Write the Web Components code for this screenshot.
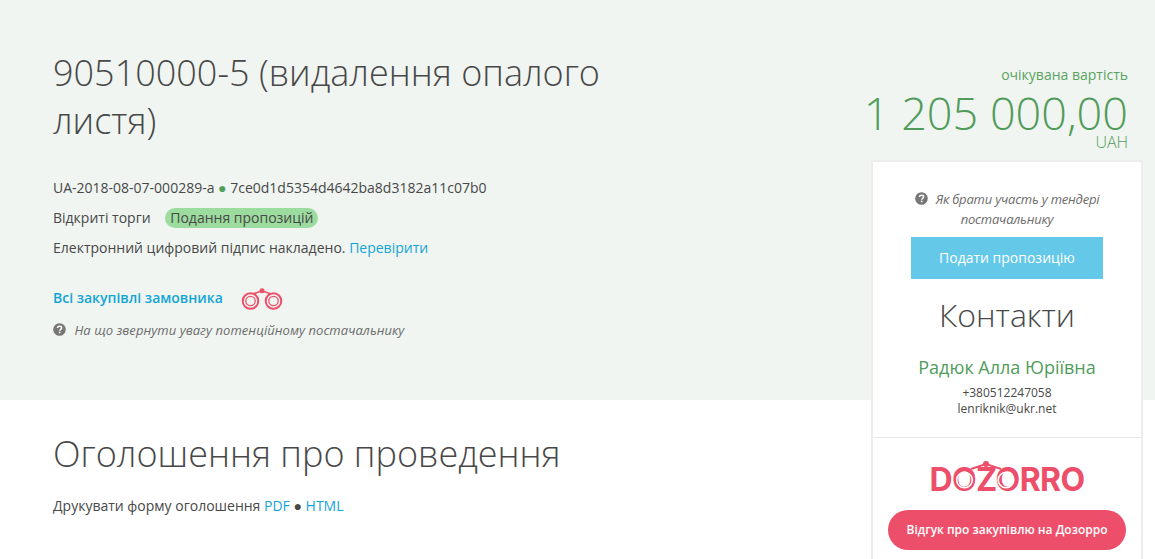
<!DOCTYPE html>
<html lang="uk">
<head>
<meta charset="utf-8">
<title>Тендер</title>
<style>
  html, body { margin: 0; padding: 0; background: #fff; height: 559px; overflow: hidden; }
  body { font-family: "Open Sans", sans-serif; color: #484848; position: relative; }
</style>
</head>
<body>
<tender-page></tender-page>

<script>
const HELP_ICON = `<svg width="13" height="13" viewBox="0 0 14 14" aria-hidden="true">
  <circle cx="7" cy="7" r="6.8" fill="#777"/>
  <path d="M4.8 5.4c.1-1.3 1-2 2.3-2s2.2.7 2.2 1.8c0 1.7-2 1.6-2 3.1" fill="none" stroke="#fff" stroke-width="1.6"/>
  <rect x="6.3" y="9.3" width="1.7" height="1.7" fill="#fff"/>
</svg>`;

const BINOCULARS = `<g fill="none" stroke="#ed4f6a">
  <circle cx="9.5" cy="13" r="7.8" stroke-width="2"/>
  <circle cx="9.5" cy="13" r="4.7" stroke-width="1.3"/>
  <circle cx="32.5" cy="13" r="7.8" stroke-width="2"/>
  <circle cx="32.5" cy="13" r="4.7" stroke-width="1.3"/>
  <path d="M12 6l9-3.2 9 3.2" stroke-width="1.6"/>
  </g><circle cx="21" cy="2.8" r="2.5" fill="#ed4f6a"/>`;

class HelpNote extends HTMLElement {
  connectedCallback() {
    this.attachShadow({ mode: 'open' });
    this.shadowRoot.innerHTML = `
      <style>
        :host {
          display: block;
          font-size: 13px;
          font-style: italic;
          line-height: 20px;
          color: #6c6c6c;
          letter-spacing: var(--note-spacing, 0.05px);
        }
        svg { vertical-align: -1px; margin-right: 5px; }
      </style>
      ${HELP_ICON}<slot></slot>
    `;
  }
}
customElements.define('help-note', HelpNote);

class TenderHero extends HTMLElement {
  connectedCallback() {
    this.attachShadow({ mode: 'open' });
    this.shadowRoot.innerHTML = `
      <style>
        :host {
          display: flex;
          justify-content: space-between;
          box-sizing: border-box;
          height: 400px;
          padding: 49px 27px 0 53px;
          background: #f0f5f1;
        }
        a { color: #13a5d6; text-decoration: none; }
        h1 {
          width: 640px;
          margin: 0 0 33px;
          font-size: 36px;
          font-weight: 300;
          line-height: 48px;
          color: #484848;
        }
        .row { font-size: 14px; line-height: 20px; margin-bottom: 10px; color: #484848; }
        .dot { color: #4f9f5b; font-size: 14px; }
        .badge {
          display: inline-block;
          margin-left: 11px;
          padding: 0 5px;
          border-radius: 10px;
          background: #9cdc9e;
          line-height: 20px;
        }
        .owner { display: flex; align-items: center; gap: 18px; margin: 28px 0 12px; height: 22px; }
        .owner a { font-weight: 600; font-size: 14px; }
        .owner svg { margin-top: 4px; }
        .price { text-align: right; color: #519c5b; }
        .price small { display: block; font-size: 14px; line-height: 20px; margin-top: 16px; color: #5aa35f; }
        .price b { display: block; font-size: 45px; font-weight: 300; line-height: 40px; margin-top: 8px; }
        .price i { display: block; font-style: normal; font-weight: 300; font-size: 16px; line-height: 18px; }
      </style>
      <div>
        <h1>90510000-5 (видалення опалого листя)</h1>
        <div class="row">UA-2018-08-07-000289-a <span class="dot">●</span> 7ce0d1d5354d4642ba8d3182a11c07b0</div>
        <div class="row">Відкриті торги <span class="badge">Подання пропозицій</span></div>
        <div class="row">Електронний цифровий підпис накладено. <a href="#">Перевірити</a></div>
        <div class="owner">
          <a href="#">Всі закупівлі замовника</a>
          <svg width="42" height="22" viewBox="0 0 42 22">${BINOCULARS}</svg>
        </div>
        <help-note>&nbsp;На що звернути увагу потенційному постачальнику</help-note>
      </div>
      <div class="price">
        <small>очікувана вартість</small>
        <b>1 205 000,00</b>
        <i>UAH</i>
      </div>
    `;
  }
}
customElements.define('tender-hero', TenderHero);

class NoticeSection extends HTMLElement {
  connectedCallback() {
    this.attachShadow({ mode: 'open' });
    this.shadowRoot.innerHTML = `
      <style>
        :host { display: block; padding: 30px 53px 0; }
        h2 { margin: 0 0 18px; font-size: 36px; font-weight: 300; line-height: 48px; color: #484848; }
        p { margin: 0; font-size: 14px; line-height: 20px; color: #484848; }
        a { color: #13a5d6; text-decoration: none; }
      </style>
      <h2>Оголошення про проведення</h2>
      <p>Друкувати форму оголошення <a href="#">PDF</a> ● <a href="#">HTML</a></p>
    `;
  }
}
customElements.define('notice-section', NoticeSection);

class SideCard extends HTMLElement {
  connectedCallback() {
    this.attachShadow({ mode: 'open' });
    this.shadowRoot.innerHTML = `
      <style>
        :host {
          display: block;
          position: absolute;
          top: 160px;
          left: 871px;
          width: 272px;
          box-sizing: border-box;
          border: 2px solid #eceeed;
          border-bottom: 0;
          background: #fff;
          text-align: center;
        }
        .top { padding: 27px 16px 20px; border-bottom: 1px solid #e8e8e8; }
        help-note { padding: 0 22px; --note-spacing: -0.2px; }
        .btn {
          display: block;
          width: 192px;
          margin: 8px auto 0;
          background: #64c8e8;
          color: #fff;
          font-size: 14px;
          line-height: 42px;
        }
        h3 { margin: 12px 0 16px; font-size: 32px; font-weight: 300; line-height: 48px; color: #484848; }
        .name { font-size: 18px; line-height: 24px; color: #519c5b; margin-bottom: 6px; }
        .contact { font-size: 12px; line-height: 16px; color: #484848; }
        .bottom { padding: 21px 15px 0; height: 122px; box-sizing: border-box; }
        .logo { position: relative; width: 156px; height: 46px; margin: 0 auto; }
        .logo span {
          position: absolute; left: 0; right: 0; top: 5px;
          font-family: Inter, "Open Sans", sans-serif;
          font-size: 32px; font-weight: 700; line-height: 32px;
          letter-spacing: -0.6px; color: #ed4f6a;
        }
        .logo svg { position: absolute; left: 0; top: 0; }
        .review {
          display: block;
          height: 40px;
          margin-top: 5px;
          border-radius: 20px;
          background: #ed4f6a;
          color: #fff;
          font-size: 12px;
          font-weight: 600;
          line-height: 40px;
        }
      </style>
      <div class="top">
        <help-note>&nbsp;Як брати участь у тендері постачальнику</help-note>
        <a class="btn">Подати пропозицію</a>
        <h3>Контакти</h3>
        <div class="name">Радюк Алла Юріївна</div>
        <div class="contact">+380512247058<br>lenriknik@ukr.net</div>
      </div>
      <div class="bottom">
        <div class="logo">
          <span>DOZORRO</span>
          <svg width="156" height="46" viewBox="0 0 156 46" fill="none">
            <circle cx="35.5" cy="21" r="7.8" stroke="#fff" stroke-width="1.6"/>
            <circle cx="77" cy="21" r="7.8" stroke="#fff" stroke-width="1.6"/>
            <path d="M42 10l15-5 15 5" stroke="#ed4f6a" stroke-width="2"/>
            <circle cx="57" cy="5" r="3" fill="#ed4f6a"/>
          </svg>
        </div>
        <a class="review">Відгук про закупівлю на Дозорро</a>
      </div>
    `;
  }
}
customElements.define('side-card', SideCard);

class TenderPage extends HTMLElement {
  connectedCallback() {
    this.attachShadow({ mode: 'open' });
    this.shadowRoot.innerHTML = `
      <style>:host { display: block; }</style>
      <tender-hero></tender-hero>
      <notice-section></notice-section>
      <side-card></side-card>
    `;
  }
}
customElements.define('tender-page', TenderPage);
</script>
</body>
</html>
